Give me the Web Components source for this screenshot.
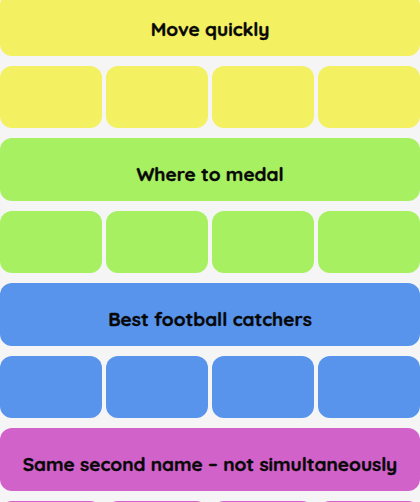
<!DOCTYPE html>
<html lang="en">
<head>
<meta charset="utf-8">
<title>Connecting wall</title>
<style>
html { background: #f5f5f5; }
body { margin: 0; height: 100vh; overflow: hidden; font-family: Quicksand, Lato, "Open Sans", sans-serif; color: #080808; }
</style>
</head>
<body>
<puzzle-wall>
  <puzzle-group style="--group:#f3f161">Move quickly</puzzle-group>
  <puzzle-group style="--group:#a6f062">Where to medal</puzzle-group>
  <puzzle-group style="--group:#5894ec">Best football catchers</puzzle-group>
  <puzzle-group style="--group:#d162ca">Same second name – not simultaneously</puzzle-group>
</puzzle-wall>
<script>
class PuzzleWall extends HTMLElement {
  constructor() {
    super();
    this.attachShadow({ mode: "open" }).innerHTML = `
      <style>
        :host { display: flex; flex-direction: column; gap: 10px; margin-top: -7px; }
      </style>
      <slot></slot>`;
  }
}
class PuzzleTile extends HTMLElement {
  constructor() {
    super();
    this.attachShadow({ mode: "open" }).innerHTML = `
      <style>
        :host { display: block; min-height: 62px; border-radius: 12px; background: var(--group); }
      </style>
      <slot></slot>`;
  }
}
class PuzzleGroup extends HTMLElement {
  constructor() {
    super();
    this.attachShadow({ mode: "open" }).innerHTML = `
      <style>
        :host { display: grid; gap: 10px; }
        h2 {
          box-sizing: border-box; min-height: 63px; margin: 0; padding: 24px 8px 15px;
          border-radius: 12px; background: var(--group);
          font-size: 19px; line-height: 24px; font-weight: 900; text-align: center;
          -webkit-text-stroke: thin currentColor;
          paint-order: stroke fill;
        }
        .tiles { display: grid; grid-template-columns: repeat(4, 1fr); gap: 4px; }
      </style>
      <h2><slot></slot></h2>
      <div class="tiles">
        <puzzle-tile></puzzle-tile><puzzle-tile></puzzle-tile>
        <puzzle-tile></puzzle-tile><puzzle-tile></puzzle-tile>
      </div>`;
  }
}
customElements.define("puzzle-tile", PuzzleTile);
customElements.define("puzzle-group", PuzzleGroup);
customElements.define("puzzle-wall", PuzzleWall);
</script>
</body>
</html>
